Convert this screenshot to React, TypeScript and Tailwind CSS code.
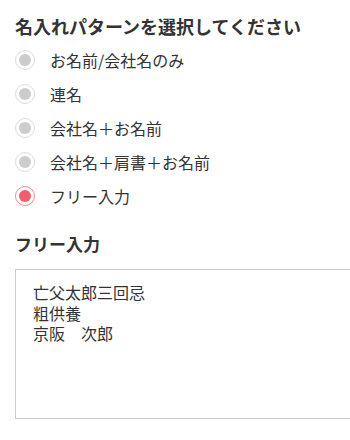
import React from "react";

const options = [
  "お名前/会社名のみ",
  "連名",
  "会社名＋お名前",
  "会社名＋肩書＋お名前",
  "フリー入力",
];

export default function App() {
  const selected = 4;
  return (
    <div
      className="w-[350px] h-[440px] overflow-hidden bg-white text-[#333] pl-[15px] pt-[13px]"
      style={{ fontFamily: '"Noto Sans CJK JP", "Noto Sans", sans-serif' }}
    >
      <h2 className="text-[18px] font-bold leading-[27px] whitespace-nowrap">
        名入れパターンを選択してください
      </h2>
      <div className="mt-[3px] flex flex-col">
        {options.map((o, i) => (
          <label key={o} className="flex h-[34px] items-center">
            {i === selected ? (
              <span className="flex h-[20px] w-[20px] items-center justify-center rounded-full border border-[#f08a90]">
                <span className="h-[12px] w-[12px] rounded-full bg-[#ee5f6b]" />
              </span>
            ) : (
              <span className="flex h-[20px] w-[20px] items-center justify-center rounded-full border border-[#dcdcdc]">
                <span className="h-[12px] w-[12px] rounded-full bg-[#cccccc]" />
              </span>
            )}
            <span className="ml-[15px] text-[16px] leading-[24px]">{o}</span>
          </label>
        ))}
      </div>
      <h3 className="mt-[18px] text-[17px] font-bold leading-[26px]">フリー入力</h3>
      <div className="mt-[12px] h-[150px] w-[360px] border border-[#cccccc] pl-[17px] pt-[12px] text-[16px] leading-[20.5px]">
        <div>亡父太郎三回忌</div>
        <div>粗供養</div>
        <div>京阪　次郎</div>
      </div>
    </div>
  );
}
